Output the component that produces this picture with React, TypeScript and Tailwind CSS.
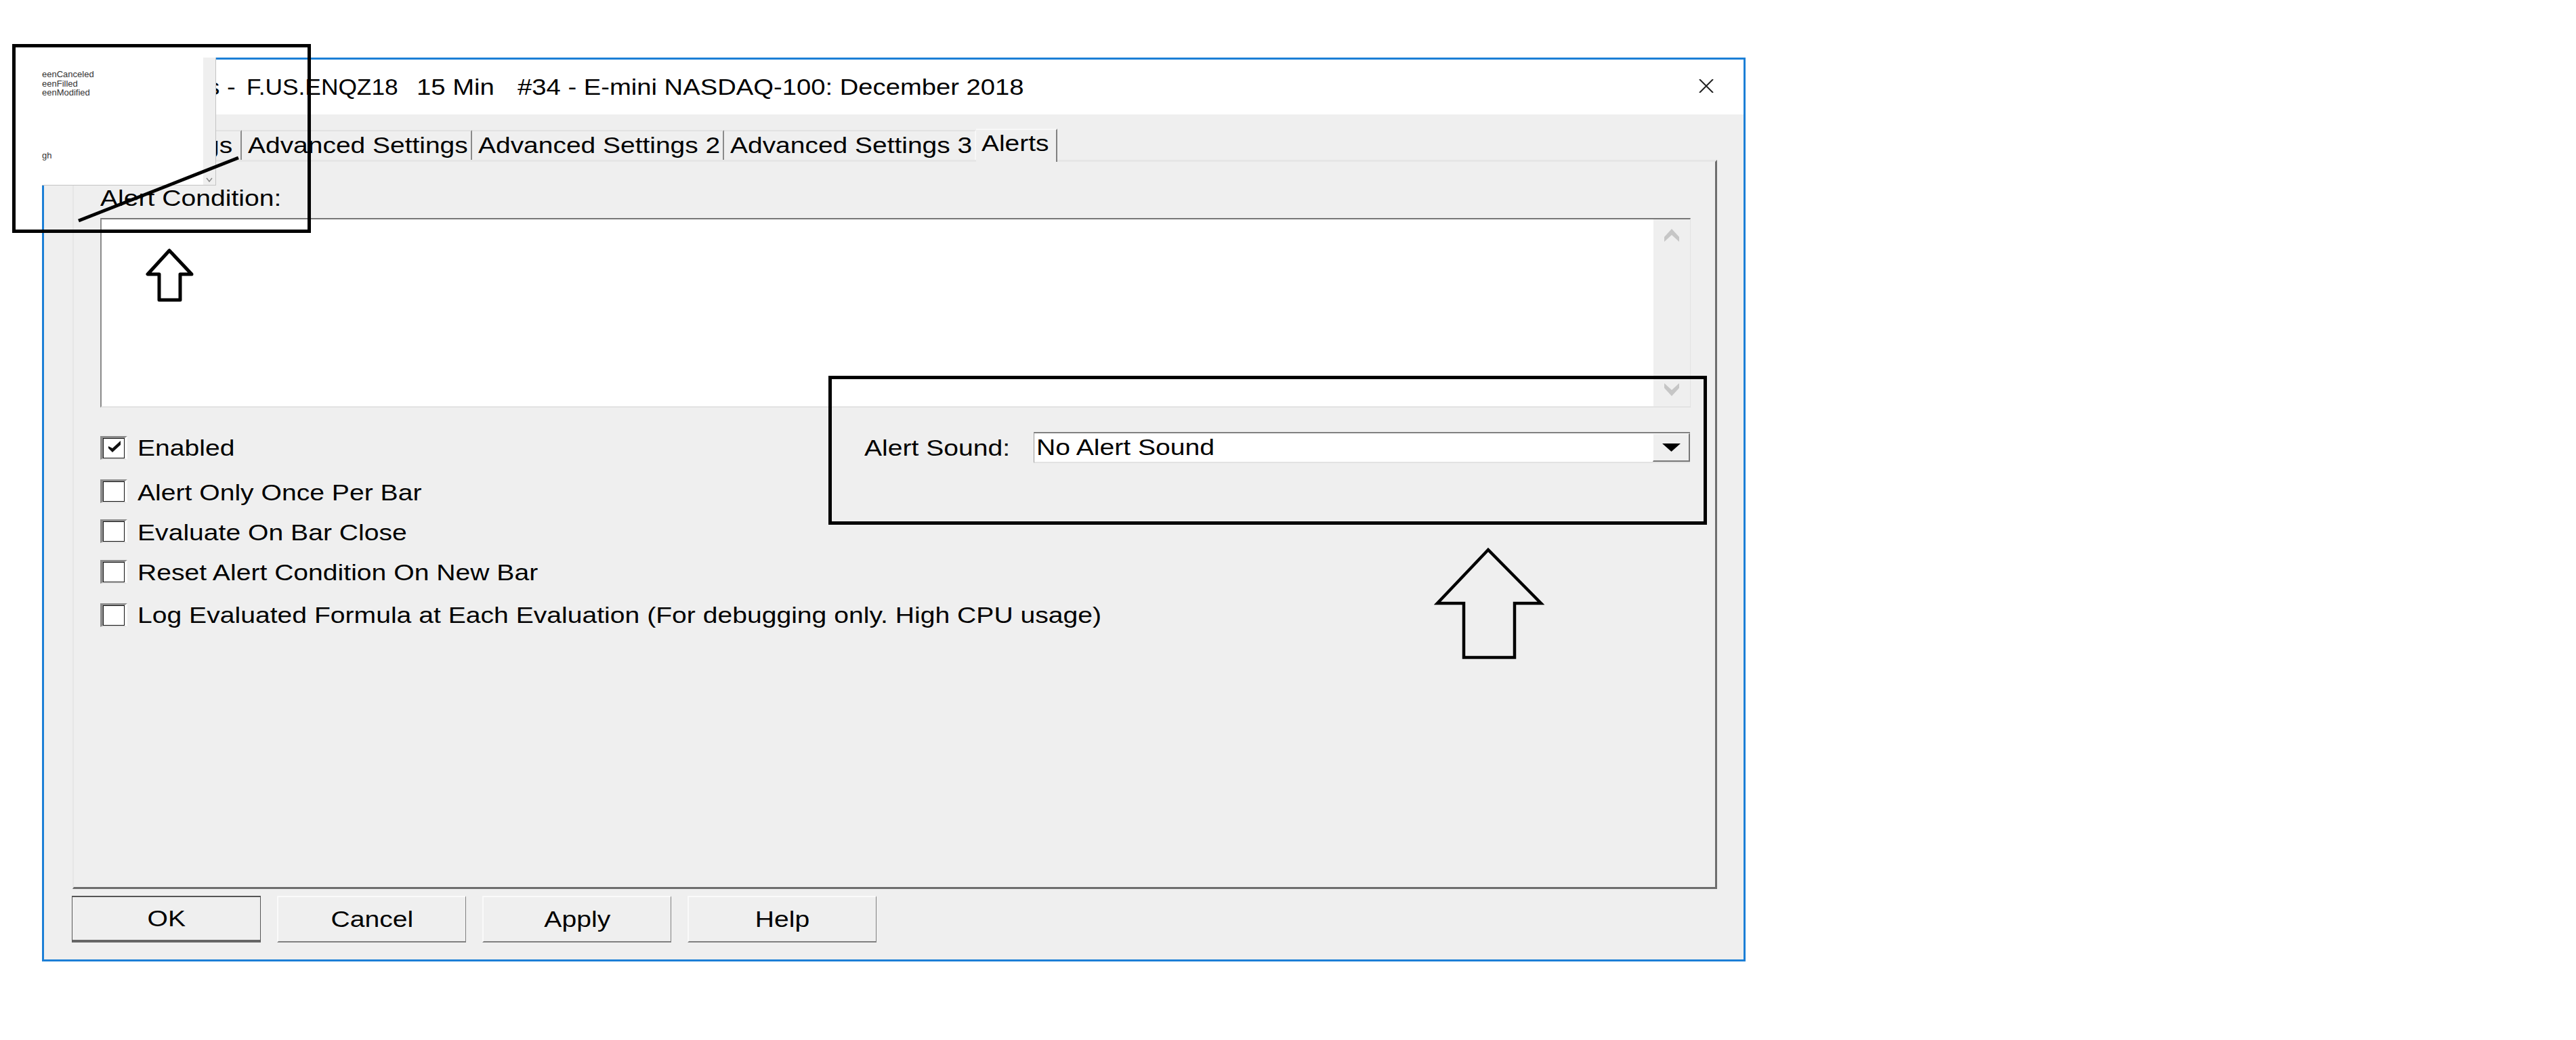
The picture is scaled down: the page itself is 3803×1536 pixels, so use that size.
import React from "react";

// Text in this screenshot is wider than Arial at its height, so it is stretched sideways
function Label({ children, center = false, stretch = "scale-x-[1.185]" }: { children: React.ReactNode; center?: boolean; stretch?: string }) {
  return (
    <span
      className={`inline-block whitespace-pre text-[33px] leading-[40px] ${stretch} ${center ? "origin-center" : "origin-left"}`}
    >
      {children}
    </span>
  );
}

function Tab({ text, width, active = false, beforeActive = false }: { text: string; width: string; active?: boolean; beforeActive?: boolean }) {
  if (active) {
    return (
      <div className={`${width} relative z-10 -mb-[3px] h-[49px] border-t-2 border-r-2 border-t-[#f8f8f8] border-r-[#808080] bg-[#efefef] pl-[8px]`}>
        <Label stretch="scale-x-[1.18]">{text}</Label>
      </div>
    );
  }
  return (
    <div className={`${width} mt-[2px] h-[44px] overflow-hidden border-t-2 border-r-2 border-t-[#e2e2e2] ${beforeActive ? "border-r-[#f8f8f8]" : "border-r-[#8a8a8a]"} pl-[9px] pt-[1px]`}>
      <Label stretch="scale-x-[1.18]">{text}</Label>
    </div>
  );
}

function Check({ text, checked = false, rowClass = "", textClass = "" }: { text: string; checked?: boolean; rowClass?: string; textClass?: string }) {
  return (
    <div className={`flex h-[35px] items-center ${rowClass}`}>
      <div className="flex h-[35px] w-[40px] shrink-0 border-t-[3px] border-l-[4px] border-r-[4px] border-b-[2px] border-t-[#8c8c8c] border-l-[#8c8c8c] border-r-[#fbfbfb] border-b-[#e0e0e0] bg-white">
        <div className="flex flex-1 items-start justify-center border border-[#111] pl-[1px] pt-[3px]">
          {checked && (
            <svg width="18" height="17" viewBox="0 0 18 17">
              <path d="M0 8 L6 11 L18 0 L18 6 L6 17 L0 11 Z" fill="#111" />
            </svg>
          )}
        </div>
      </div>
      <div className={`ml-[15px] ${textClass}`}>
        <Label>{text}</Label>
      </div>
    </div>
  );
}

function Btn({ text, isDefault = false }: { text: string; isDefault?: boolean }) {
  const edge = isDefault
    ? "border-t-2 border-l border-r border-b-[4px] border-t-[#555] border-l-[#555] border-r-[#555] border-b-[#666]"
    : "border-t-2 border-l-2 border-r border-b-2 border-t-[#fafafa] border-l-[#fafafa] border-r-[#808080] border-b-[#808080]";
  return (
    <div className={`flex h-[69px] w-[279px] items-center justify-center ${edge}`}>
      <Label center>{text}</Label>
    </div>
  );
}

export default function App() {
  return (
    <div className="relative h-[1536px] w-[3803px] overflow-hidden bg-white pl-[62px] pt-[85px] font-['Liberation_Sans',Arial,sans-serif] text-black">
      {/* dialog */}
      <div className="flex h-[1335px] w-[2515px] flex-col border-[3px] border-[#1c7fd6]">
        <div className="flex h-[81px] shrink-0 items-center bg-white pl-[121px] pr-[44px]">
          <div className="w-[178px]">
            <Label stretch="scale-x-[1.16]">{"Settings - "}</Label>
          </div>
          <div className="w-[251px]">
            <Label stretch="scale-x-[1.07]">F.US.ENQZ18</Label>
          </div>
          <div className="w-[149px]">
            <Label stretch="scale-x-[1.16]">15 Min</Label>
          </div>
          <div className="flex-1">
            <Label stretch="scale-x-[1.158]">#34 - E-mini NASDAQ-100: December 2018</Label>
          </div>
          <svg width="22" height="20" viewBox="0 0 22 20" className="-mt-[4px]">
            <path d="M1 0 L21 20 M21 0 L1 20" stroke="#222" strokeWidth="2" fill="none" />
          </svg>
        </div>

        <div className="flex flex-1 flex-col bg-[#efefef]">
          <div className="ml-[42px] mt-[21px] flex items-end">
            <Tab text="        Settings" width="w-[250px]" />
            <Tab text="Advanced Settings" width="w-[340px]" />
            <Tab text="Advanced Settings 2" width="w-[372px]" />
            <Tab text="Advanced Settings 3" width="w-[372px]" beforeActive />
            <Tab text="Alerts" width="w-[120px]" active />
          </div>

          <div className="ml-[42px] flex w-[2428px] flex-1 flex-col border-t-[3px] border-l-2 border-r-[3px] border-b-[3px] border-t-[#e6e6e6] border-l-[#e6e6e6] border-r-[#6e6e6e] border-b-[#6e6e6e] pl-[39px] pr-[36px]">
            <div className="mt-[34px] h-[39px]">
              <Label>Alert Condition:</Label>
            </div>
            <div className="mt-[10px] flex h-[280px] w-[2348px] justify-end border-t-2 border-l-2 border-r border-b-2 border-t-[#777] border-l-[#8a8a8a] border-r-[#e2e2e2] border-b-[#e2e2e2] bg-white">
              <div className="flex w-[54px] flex-col items-center justify-between bg-[#efefef] pb-[15px] pt-[14px]">
                <svg width="24" height="19" viewBox="0 0 24 19">
                  <path d="M12 0 L23 12 L23 19 L12 9 L1 19 L1 12 Z" fill="#c6c6c6" />
                </svg>
                <svg width="24" height="19" viewBox="0 0 24 19">
                  <path d="M12 19 L23 7 L23 0 L12 10 L1 0 L1 7 Z" fill="#c6c6c6" />
                </svg>
              </div>
            </div>

            <div className="mt-[42px] flex w-[2347px] items-start">
              <div className="flex w-[1128px] shrink-0 flex-col">
                <Check text="Enabled" checked />
                <Check text="Alert Only Once Per Bar" rowClass="mt-[29px]" textClass="pt-[5px]" />
                <Check text="Evaluate On Bar Close" rowClass="mt-[24px]" textClass="pt-[5px]" />
                <Check text="Reset Alert Condition On New Bar" rowClass="mt-[25px]" textClass="pt-[3px]" />
                <Check text="Log Evaluated Formula at Each Evaluation (For debugging only. High CPU usage)" rowClass="mt-[29px]" />
              </div>

              <div className="-mt-[6px] flex w-[1219px] shrink-0 items-center">
                <div className="w-[250px] pt-[1px]">
                  <Label>Alert Sound:</Label>
                </div>
                <div className="flex h-[46px] flex-1 items-stretch border-t-2 border-l border-b-2 border-t-[#808080] border-l-[#9a9a9a] border-b-[#e2e2e2] bg-white">
                  <div className="flex-1 pl-[3px] pt-[1px]">
                    <Label>No Alert Sound</Label>
                  </div>
                  <div className="flex w-[55px] items-center justify-center border-t border-l border-r-2 border-b-2 border-t-white border-l-white border-r-[#777] border-b-[#777] bg-[#efefef]">
                    <svg width="27" height="12" viewBox="0 0 27 12">
                      <path d="M0 0 L27 0 L13.5 12 Z" fill="#000" />
                    </svg>
                  </div>
                </div>
              </div>
            </div>
          </div>

          <div className="ml-[41px] flex h-[104px] shrink-0 gap-[24px] pt-[10px]">
            <Btn text="OK" isDefault />
            <Btn text="Cancel" />
            <Btn text="Apply" />
            <Btn text="Help" />
          </div>
        </div>
      </div>

      {/* pasted white patch from another window */}
      <div className="absolute left-[62px] top-[85px] z-20 flex h-[189px] w-[257px] border-r border-b border-r-[#c4c4c4] border-b-[#c4c4c4] bg-white">
        <div className="flex-1 text-[13px] leading-[13px] text-[#333]">
          <div className="mt-[18px]">eenCanceled</div>
          <div className="mt-[1px]">eenFilled</div>
          <div>eenModified</div>
          <div className="mt-[80px]">gh</div>
        </div>
        <div className="flex w-[18px] items-end justify-center bg-[#efefef] pb-[3px]">
          <svg width="10" height="8" viewBox="0 0 10 8">
            <path d="M1 1 L5 6 L9 1" stroke="#8a8a8a" strokeWidth="1.5" fill="none" />
          </svg>
        </div>
      </div>

      {/* annotation marks drawn over the dialog */}
      <div className="absolute left-[18px] top-[65px] z-30 h-[279px] w-[441px] border-[5px] border-black" />
      <div className="absolute left-[1223px] top-[555px] z-30 h-[220px] w-[1297px] border-[5px] border-black" />

      <svg className="absolute left-0 top-0 z-40" width="2400" height="1000" viewBox="0 0 2400 1000" fill="none">
        <path d="M352 233 L116 326" stroke="#000" strokeWidth="5" />
        <path d="M250 370 L218 405 L235 405 L235 443 L266 443 L266 405 L283 405 Z" stroke="#000" strokeWidth="5" strokeLinejoin="round" />
        <path d="M2197 812 L2122 891 L2161 891 L2161 971 L2236 971 L2236 891 L2275 891 Z" stroke="#000" strokeWidth="4.5" />
      </svg>
    </div>
  );
}
